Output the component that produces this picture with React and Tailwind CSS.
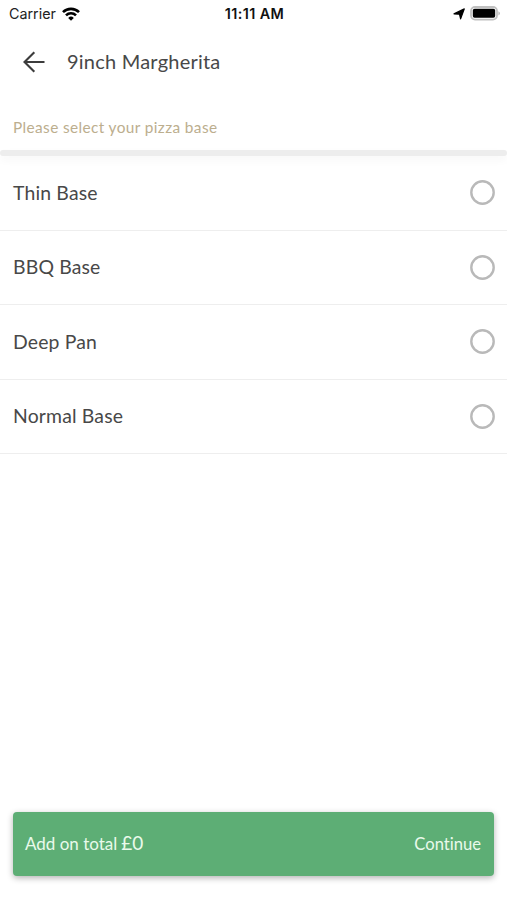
const bases = ["Thin Base", "BBQ Base", "Deep Pan", "Normal Base"];

function StatusBar() {
  return (
    <div className="grid h-[27px] grid-cols-3 items-center pl-[9px] pr-[7px] font-[Inter,sans-serif] text-[14px] leading-[27px] text-[#222]">
      <div className="flex items-center gap-[6px]">
        <span className="text-[14.3px]">Carrier</span>
        <svg width="18" height="14" viewBox="0 0 18 14" fill="none" stroke="#000" strokeWidth="2.6">
          <path d="M1 5.2a11.3 11.3 0 0 1 16 0" />
          <path d="M4 8.4a7 7 0 0 1 10 0" />
          <path d="M9 13.7 6.2 10.9a4 4 0 0 1 5.6 0Z" fill="#000" stroke="none" />
        </svg>
      </div>
      <span className="text-center text-[14.4px] font-semibold tracking-[0.4px] text-[#111]">11:11 AM</span>
      <div className="flex items-center justify-end gap-[5px]">
        <svg width="12" height="12" viewBox="0 0 12 12">
          <path d="M11.3.9 7.6 10.9 6.5 6.2 1 5.9Z" fill="#000" stroke="#000" strokeWidth="1.2" strokeLinejoin="round" />
        </svg>
        <svg width="30" height="15" viewBox="0 0 30 15">
          <rect x="1" y="1" width="26" height="12.6" rx="4" fill="#fff" stroke="#c0c0c0" strokeWidth="1.8" />
          <rect x="2.8" y="2.8" width="22.4" height="9" rx="1.8" fill="#000" />
          <path d="M28.4 5.2q1.6.8 1.6 2.1t-1.6 2.1Z" fill="#bcbcbc" />
        </svg>
      </div>
    </div>
  );
}

export default function App() {
  return (
    <div className="flex h-[900px] w-[507px] flex-col overflow-hidden bg-white font-[Lato,sans-serif] text-[#484848] [font-variant-ligatures:none]">
      <StatusBar />
      <header className="flex h-[70px] items-center gap-[22px] pl-[23px]">
        <svg width="22" height="22" viewBox="0 0 22 22" fill="none" stroke="#3c3c3c" strokeWidth="2.1">
          <path d="M21.5 11H1.5M11.3 1.2 1.5 11l9.8 9.8" />
        </svg>
        <h1 className="pb-[2px] text-[20px] leading-[26px] tracking-[0.22px]">9inch Margherita</h1>
      </header>
      <p className="h-[53px] pl-[13px] pt-[19px] text-[15.4px] leading-[22px] tracking-[0.38px] text-[#bcae8e]">
        Please select your pizza base
      </p>
      <div className="h-[6px] shrink-0 rounded-full bg-[#ededed] shadow-[0_4px_8px_rgba(0,0,0,0.04)]" />
      <ul>
        {bases.map((base) => (
          <li key={base} className="flex h-[74.5px] items-center justify-between border-b border-[#eeeeee] pl-[13px] pr-[12px]">
            <span className="text-[19.4px] leading-[24px] tracking-[0.16px]">{base}</span>
            <svg className="size-[25px]" viewBox="0 0 25 25" fill="none" stroke="#b9b9b9" strokeWidth="2.4">
              <circle cx="12.5" cy="12.5" r="11.2" />
            </svg>
          </li>
        ))}
      </ul>
      <button className="mx-[13px] mb-[24px] mt-auto flex h-[64px] shrink-0 items-center justify-between rounded-[4px] bg-[#5dae75] pl-[12px] pr-[13px] text-[17px] text-[#e9faeb] shadow-[0_2px_6px_rgba(0,0,0,0.3)]">
        <span className="flex items-baseline gap-[4px] pb-px">
          <span>Add on total</span>
          <span className="text-[19px]">£0</span>
        </span>
        <span className="text-[16.6px]">Continue</span>
      </button>
    </div>
  );
}
